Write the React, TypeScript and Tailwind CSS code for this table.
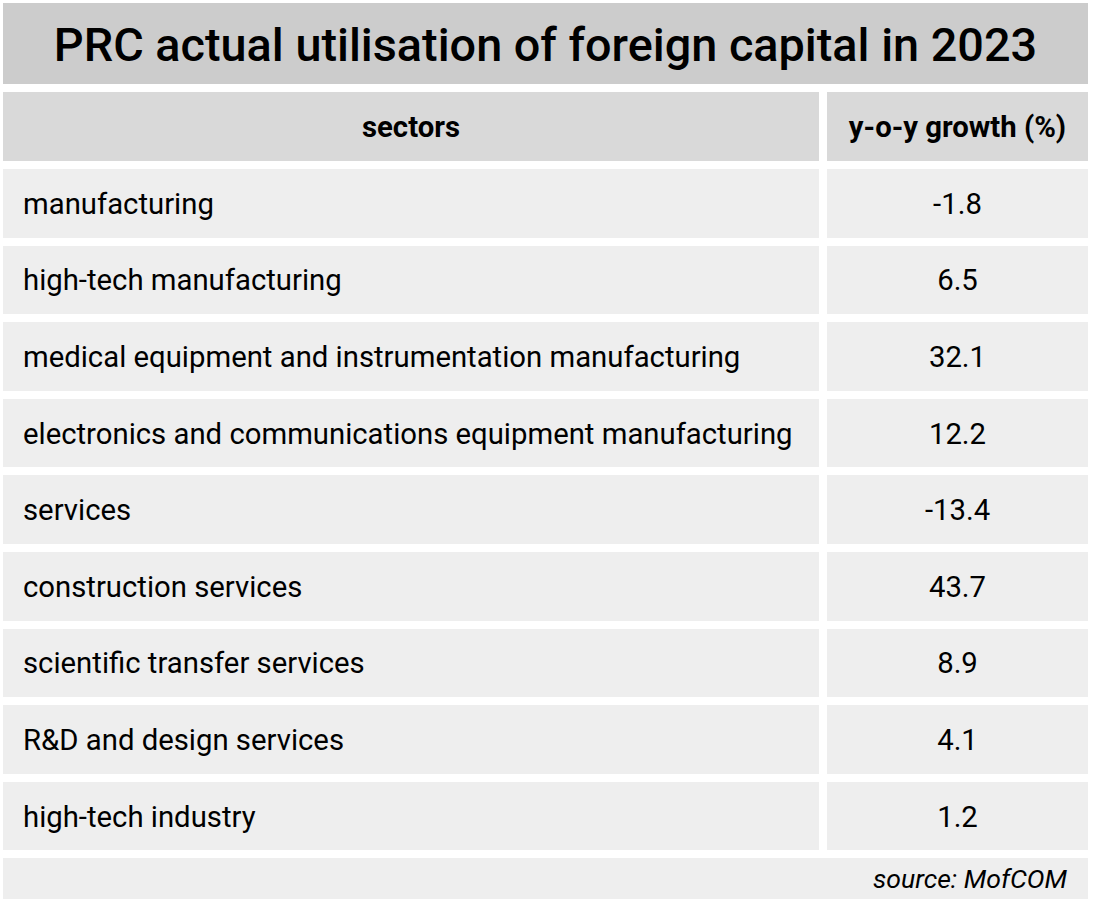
import React from "react";

const rows: [string, string][] = [
  ["manufacturing", "-1.8"],
  ["high-tech manufacturing", "6.5"],
  ["medical equipment and instrumentation manufacturing", "32.1"],
  ["electronics and communications equipment manufacturing", "12.2"],
  ["services", "-13.4"],
  ["construction services", "43.7"],
  ["scientific transfer services", "8.9"],
  ["R&D and design services", "4.1"],
  ["high-tech industry", "1.2"],
];

export default function App() {
  return (
    <div
      className="w-[1094px] h-[910px] bg-white pt-[3px] pl-[3px] text-black"
      style={{ fontFamily: "Roboto, 'Liberation Sans', sans-serif" }}
    >
      <div className="w-[1085px] flex flex-col gap-[8px]">
        <div className="h-[81px] bg-[#cccccc] flex items-center justify-center pt-[3px] text-[46.8px] font-medium leading-none">
          PRC actual utilisation of foreign capital in 2023
        </div>
        <div className="flex gap-[8px] h-[69px]">
          <div className="w-[816px] bg-[#d9d9d9] flex items-center justify-center pt-[2px] text-[29.3px] font-bold">
            sectors
          </div>
          <div className="flex-1 bg-[#d9d9d9] flex items-center justify-center pt-[2px] text-[29.3px] font-bold">
            y-o-y growth (%)
          </div>
        </div>
        {rows.map(([s, v]) => (
          <div key={s} className="flex gap-[8px] h-[68.6px]">
            <div className="w-[816px] bg-[#eeeeee] flex items-center pl-[20px] pt-[3px] text-[29.3px]">
              {s}
            </div>
            <div className="flex-1 bg-[#eeeeee] flex items-center justify-center pt-[3px] text-[29.3px]">
              {v}
            </div>
          </div>
        ))}
        <div className="h-[41px] bg-[#eeeeee] flex items-center justify-end pr-[21px] pt-[1px] text-[26.6px] italic">
          source: MofCOM
        </div>
      </div>
    </div>
  );
}
